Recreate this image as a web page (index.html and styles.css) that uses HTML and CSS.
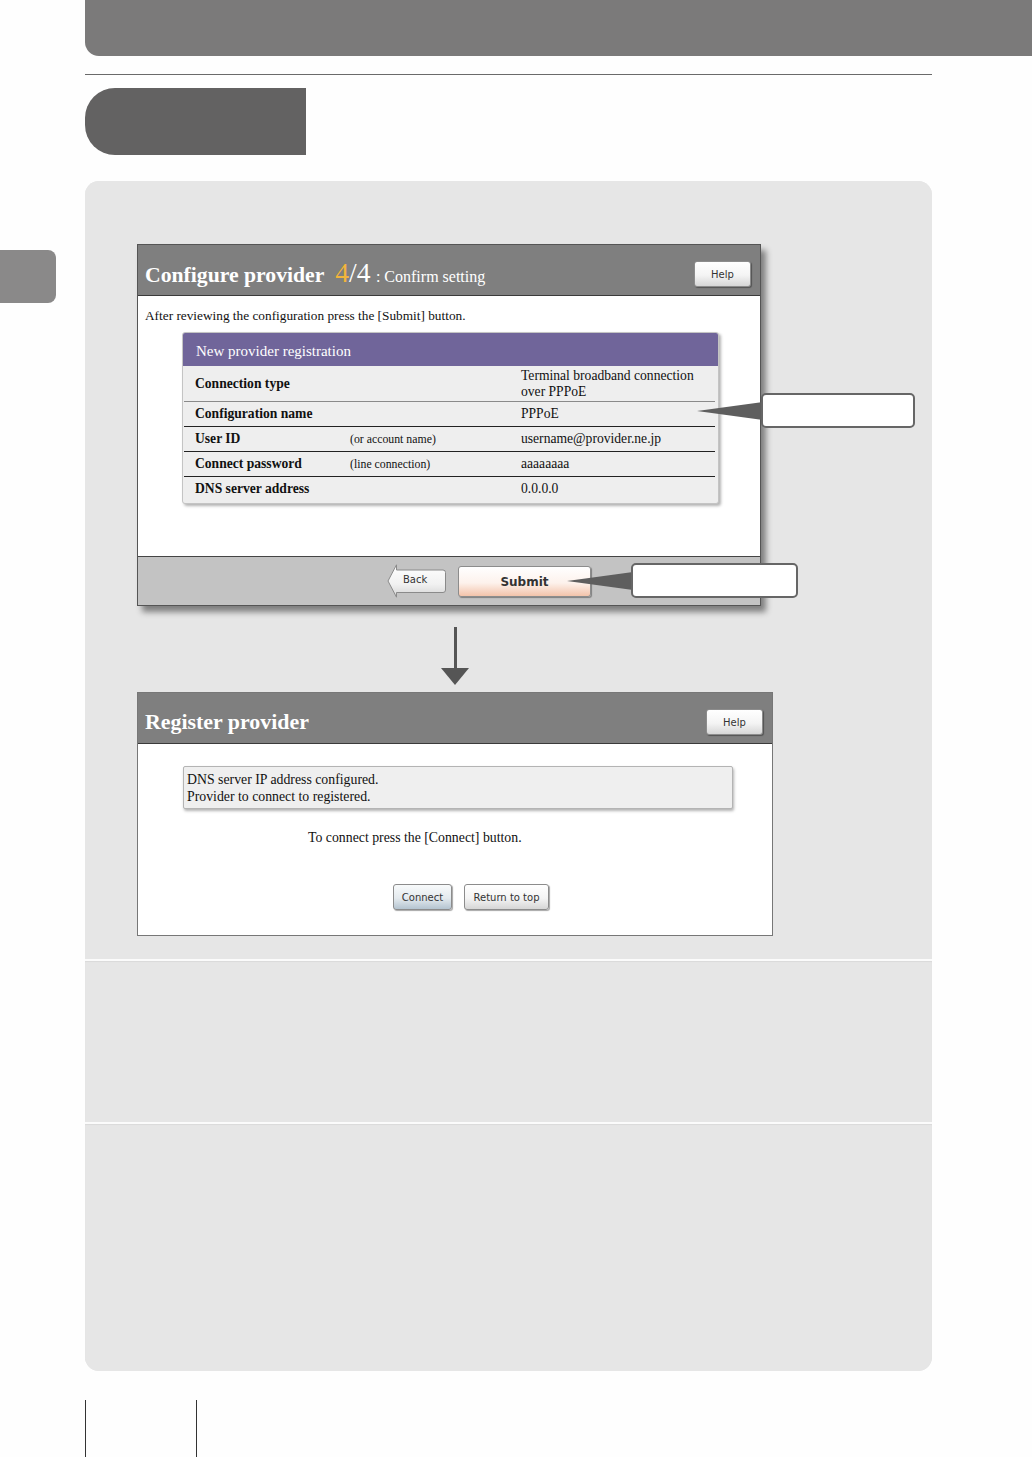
FILE: index.html
```html
<!DOCTYPE html>
<html>
<head>
<meta charset="utf-8">
<title>Configure provider</title>
<link rel="stylesheet" href="styles.css">
</head>
<body>
<div class="topbar"></div>
<div class="rule"></div>
<div class="tab"></div>

<div class="row">
  <div class="sidetab"></div>
  <div class="panel">
    <div class="section first">
      <div class="figure">
        <div class="window confirm">
          <div class="titlebar">
            <h1 class="wtitle">Configure provider <span class="step"><span class="cur">4</span>/4</span> <span class="sub">: Confirm setting</span></h1>
            <span class="btn help">Help</span>
          </div>
          <div class="wbody">
            <p class="lead">After reviewing the configuration press the [Submit] button.</p>
            <div class="reg">
              <div class="reg-head">New provider registration</div>
              <div class="reg-row tall light">
                <span class="k">Connection type</span><span class="n"></span>
                <span class="v">Terminal broadband connection<br>over PPPoE</span>
              </div>
              <div class="reg-row">
                <span class="k">Configuration name</span><span class="n"></span>
                <span class="v">PPPoE</span>
              </div>
              <div class="reg-row">
                <span class="k">User ID</span><span class="n">(or account name)</span>
                <span class="v">username@provider.ne.jp</span>
              </div>
              <div class="reg-row">
                <span class="k">Connect password</span><span class="n">(line connection)</span>
                <span class="v">aaaaaaaa</span>
              </div>
              <div class="reg-row last">
                <span class="k">DNS server address</span><span class="n"></span>
                <span class="v">0.0.0.0</span>
              </div>
            </div>
          </div>
          <div class="wfoot">
            <span class="back">
              <svg class="back-shape" width="60" height="34" viewBox="0 0 60 34">
                <defs>
                  <linearGradient id="gb" x1="0" y1="0" x2="0" y2="1">
                    <stop offset="0" stop-color="#ffffff"/>
                    <stop offset="0.6" stop-color="#f1f1f1"/>
                    <stop offset="1" stop-color="#d4d4d4"/>
                  </linearGradient>
                </defs>
                <path d="M9.5 0.8 L9.5 6 L56 6 Q58.5 6 58.5 8.5 L58.5 26 Q58.5 28.5 56 28.5 L9.5 28.5 L9.5 33.2 L1 17 Z" fill="url(#gb)" stroke="#8a8a8a" stroke-width="1"/>
              </svg>
              <span class="back-label">Back</span>
            </span>
            <span class="btn submit">Submit</span>
          </div>
        </div>

        <div class="down">
          <div class="down-line"></div>
          <div class="down-head"></div>
        </div>

        <div class="window done">
          <div class="titlebar">
            <h1 class="wtitle">Register provider</h1>
            <span class="btn help">Help</span>
          </div>
          <div class="wbody">
            <div class="msg">DNS server IP address configured.<br>Provider to connect to registered.</div>
            <p class="hint">To connect press the [Connect] button.</p>
            <div class="actions">
              <span class="btn connect">Connect</span>
              <span class="btn plain">Return to top</span>
            </div>
          </div>
        </div>

        <div class="callout c1">
          <svg class="pointer" width="66" height="20" viewBox="0 0 66 20"><path d="M0 10 L66 1 L66 19 Z" fill="#5e5e5e"/></svg>
          <div class="callout-box"></div>
        </div>
        <div class="callout c2">
          <svg class="pointer" width="66" height="20" viewBox="0 0 66 20"><path d="M0 10 L66 1 L66 19 Z" fill="#5e5e5e"/></svg>
          <div class="callout-box"></div>
        </div>
      </div>
    </div>
    <div class="section second"></div>
    <div class="section third"></div>
  </div>
</div>

<div class="pagefoot"><div class="pagebox"></div></div>
</body>
</html>
```

FILE: styles.css
```css
/* manual page: provider setup, confirm and register */

body
{ margin: 0;
background-color: #fefefe;
font-family: "Liberation Serif", "Times New Roman", serif;
color: #111;
}

.topbar
{ margin-left: 85px;
height: 56px;
background-color: #7b7a7a;
border-bottom-left-radius: 14px;
}

.rule
{ margin: 18px 100px 0 85px;
border-top: 1px solid #6a6a6a;
}

.tab
{ margin: 13px 0 0 85px;
width: 221px;
height: 67px;
background-color: #636262;
border-radius: 30px 0 0 30px;
}

.row
{ display: flex;
align-items: flex-start;
margin-top: 26px;
}

.sidetab
{ width: 56px;
height: 53px;
margin-top: 69px;
margin-right: 29px;
background-color: #8a8989;
border-radius: 0 8px 8px 0;
}

.panel
{ width: 847px;
background-color: #e6e6e6;
border-radius: 14px;
overflow: hidden;
}

.section
{ background-color: #e6e6e6;
}

.section.first
{ height: 778px;
}

.section.second
{ height: 161px;
border-top: 2px solid #fbfbfb;
box-shadow: inset 0 1px 1px #dadada;
}

.section.third
{ height: 247px;
border-top: 2px solid #fbfbfb;
box-shadow: inset 0 1px 1px #dadada;
}

.figure
{ position: relative;
padding: 63px 0 0 52px;
}

/* browser windows */

.window
{ background-color: #fff;
border: 1px solid #555;
}

.window.confirm
{ width: 622px;
box-shadow: 5px 6px 6px rgba(0,0,0,0.45);
}

.window.done
{ width: 634px;
margin-top: 7px;
border-color: #777;
}

.titlebar
{ display: flex;
align-items: center;
justify-content: space-between;
height: 50px;
padding: 0 9px 0 7px;
background-color: #7f7f7f;
border-bottom: 1px solid #3a3a3a;
}

.wtitle
{ margin: 6px 0 0;
font-size: 21.7px;
font-weight: bold;
color: #fff;
white-space: nowrap;
}

.done .wtitle
{ margin-top: 8px;
font-size: 21.9px;
}

.step
{ margin-left: 6px;
font-size: 27.5px;
font-weight: normal;
}

.step .cur
{ color: #f2b43a;
}

.sub
{ font-size: 16px;
font-weight: normal;
}

.btn
{ display: inline-flex;
align-items: center;
justify-content: center;
font-family: "DejaVu Sans", Verdana, sans-serif;
font-size: 10px;
color: #333;
border: 1px solid #8c8c8c;
border-radius: 3px;
background: linear-gradient(#ffffff, #f4f4f4 55%, #d6d6d6);
box-shadow: 1px 1px 1px rgba(0,0,0,0.35);
}

.btn.help
{ width: 55px;
height: 24px;
margin-top: 8px;
}

.wbody
{ display: flow-root;
}

.confirm .wbody
{ height: 260px;
}

.lead
{ margin: 0;
padding: 12px 0 0 7px;
font-size: 13.3px;
line-height: 15px;
}

.reg
{ margin: 9px 0 0 44px;
width: 535px;
background-color: #eeeeee;
border: 1px solid #c4c4c4;
border-radius: 3px;
box-shadow: 2px 2px 3px rgba(0,0,0,0.3);
padding-bottom: 2px;
}

.reg-head
{ height: 33px;
line-height: 36px;
padding-left: 13px;
background-color: #70659a;
color: #fff;
font-size: 15px;
border-radius: 2px 2px 0 0;
}

.reg-row
{ display: flex;
align-items: center;
height: 24px;
margin: 0 3px 0 1px;
padding-left: 11px;
border-bottom: 1px solid #222;
font-size: 13.6px;
}

.reg-row.tall
{ height: 35px;
}

.reg-row.light
{ border-bottom-color: #8a8a8a;
}

.reg-row.last
{ border-bottom: none;
}

.reg-row .k
{ width: 155px;
font-weight: bold;
}

.reg-row .n
{ width: 171px;
font-size: 11.8px;
}

.reg-row .v
{ line-height: 16px;
}

.wfoot
{ display: flex;
align-items: center;
justify-content: flex-end;
gap: 11px;
height: 48px;
padding-right: 169px;
background-color: #c3c3c3;
border-top: 1px solid #444;
}

.back
{ position: relative;
width: 60px;
height: 34px;
}

.back-shape
{ position: absolute;
left: 0;
top: 0;
}

.back-label
{ position: absolute;
left: 16px;
top: 10px;
font-family: "DejaVu Sans", Verdana, sans-serif;
font-size: 10px;
color: #333;
}

.btn.submit
{ width: 131px;
height: 29px;
margin-top: 1px;
font-size: 12px;
font-weight: bold;
background: linear-gradient(#ffffff, #fdf2ec 55%, #f3c3aa);
}

/* arrow between the two screens */

.down
{ display: flex;
flex-direction: column;
align-items: center;
width: 28px;
margin: 21px 0 0 304px;
}

.down-line
{ width: 3px;
height: 41px;
background-color: #555;
}

.down-head
{ width: 0;
height: 0;
border-left: 14px solid transparent;
border-right: 14px solid transparent;
border-top: 17px solid #555;
}

/* second screen */

.done .wbody
{ height: 191px;
}

.msg
{ margin: 22px 0 0 45px;
width: 545px;
height: 37px;
padding: 4px 0 0 3px;
background-color: #efefef;
border: 1px solid #b4b4b4;
border-radius: 2px;
box-shadow: 1px 2px 3px rgba(0,0,0,0.3);
font-size: 13.8px;
line-height: 17px;
}

.hint
{ margin: 0;
padding: 21px 0 0 170px;
font-size: 13.8px;
}

.actions
{ display: flex;
gap: 12px;
padding: 38px 0 0 255px;
}

.btn.connect
{ width: 57px;
height: 24px;
background: linear-gradient(#f8fafb, #e4eaee 55%, #b4c4d0);
}

.btn.plain
{ width: 83px;
height: 24px;
}

/* callouts pointing at the screens */

.callout
{ position: absolute;
display: flex;
align-items: center;
}

.callout.c1
{ left: 612px;
top: 212px;
}

.callout.c2
{ left: 482px;
top: 382px;
}

.pointer
{ display: block;
margin-right: -2px;
}

.callout-box
{ width: 150px;
height: 31px;
background-color: #fff;
border: 2px solid #666;
border-radius: 5px;
}

.c2 .callout-box
{ width: 163px;
}

.pagefoot
{ margin: 29px 0 0 85px;
}

.pagebox
{ width: 110px;
height: 57px;
border-left: 1px solid #333;
border-right: 1px solid #333;
}
```
